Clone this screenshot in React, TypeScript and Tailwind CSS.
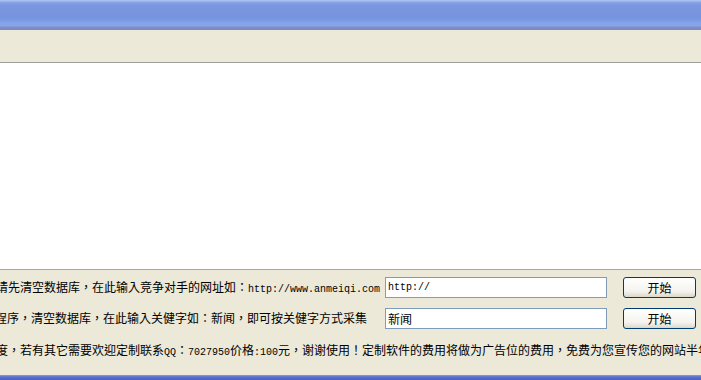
import React from "react";

const cjk = { fontFamily: '"Noto Sans CJK TC", "Noto Sans CJK SC", "Liberation Sans", sans-serif' };
const mono = { fontFamily: '"Liberation Mono", "Noto Sans CJK SC", monospace' };

function XpButton({ label }: { label: string }) {
  return (
    <button
      className="ml-[16px] h-[21px] w-[73px] rounded-[3px] border border-[#003c74] bg-[linear-gradient(#ffffff,#f4f3ee_70%,#dcd8c8)] text-[12px] leading-[19px] text-black"
      style={cjk}
    >
      {label}
    </button>
  );
}

export default function App() {
  return (
    <div className="flex h-[380px] w-[701px] flex-col overflow-hidden bg-[#ece9d8]">
      {/* title bar */}
      <div className="h-[30px] shrink-0 bg-[linear-gradient(#a9c0f5_0px,#a9c0f5_1px,#8aa6e8_2px,#7b97df_5px,#7693de_18px,#84a3e9_23px,#86a6ea_26px,#7e8fc9_27px,#7b89c2_30px)]" />

      {/* toolbar area */}
      <div className="h-[32px] shrink-0 bg-[#ece9d8]" />
      <div className="h-px shrink-0 bg-[#9d9d9d]" />

      {/* list / content area */}
      <div className="h-[206px] shrink-0 bg-white" />
      <div className="h-px shrink-0 bg-[#a7a6aa]" />

      {/* bottom panel */}
      <div className="flex h-[105px] shrink-0 flex-col pt-[7px] text-[12px] text-black">
        <div className="flex h-[21px] items-center">
          <div className="w-[385px] overflow-hidden whitespace-nowrap">
            <span className="ml-[-4px] inline-block" style={cjk}>
              请先清空数据库，在此输入竞争对手的网址如：
              <span className="text-[10px]" style={mono}>
                http://www.anmeiqi.com
              </span>
            </span>
          </div>
          <input
            defaultValue="http://"
            className="h-[21px] w-[222px] border border-[#7f9db9] bg-white px-[2px] text-[10px] outline-none"
            style={mono}
          />
          <XpButton label="开始" />
        </div>

        <div className="mt-[10px] flex h-[21px] items-center">
          <div className="w-[385px] overflow-hidden whitespace-nowrap">
            <span className="ml-[-5px] inline-block" style={cjk}>
              程序，清空数据库，在此输入关健字如：新闻，即可按关健字方式采集
            </span>
          </div>
          <input
            defaultValue="新闻"
            className="h-[21px] w-[222px] border border-[#7f9db9] bg-white px-[2px] text-[12px] outline-none"
            style={cjk}
          />
          <XpButton label="开始" />
        </div>

        <div className="mt-[13px] h-[16px] overflow-hidden whitespace-nowrap leading-[16px]">
          <span className="ml-[-4px] inline-block" style={cjk}>
            度，若有其它需要欢迎定制联系
            <span className="text-[10px]" style={mono}>QQ</span>：
            <span className="text-[10px]" style={mono}>7027950</span>价格
            <span className="text-[10px]" style={mono}>:100</span>
            元，谢谢使用！定制软件的费用将做为广告位的费用，免费为您宣传您的网站半年
          </span>
        </div>
      </div>

      {/* bottom frame */}
      <div className="h-[5px] shrink-0 bg-[linear-gradient(#8c9ad8,#5a6fd0_40%,#4a5fc6)]" />
    </div>
  );
}
